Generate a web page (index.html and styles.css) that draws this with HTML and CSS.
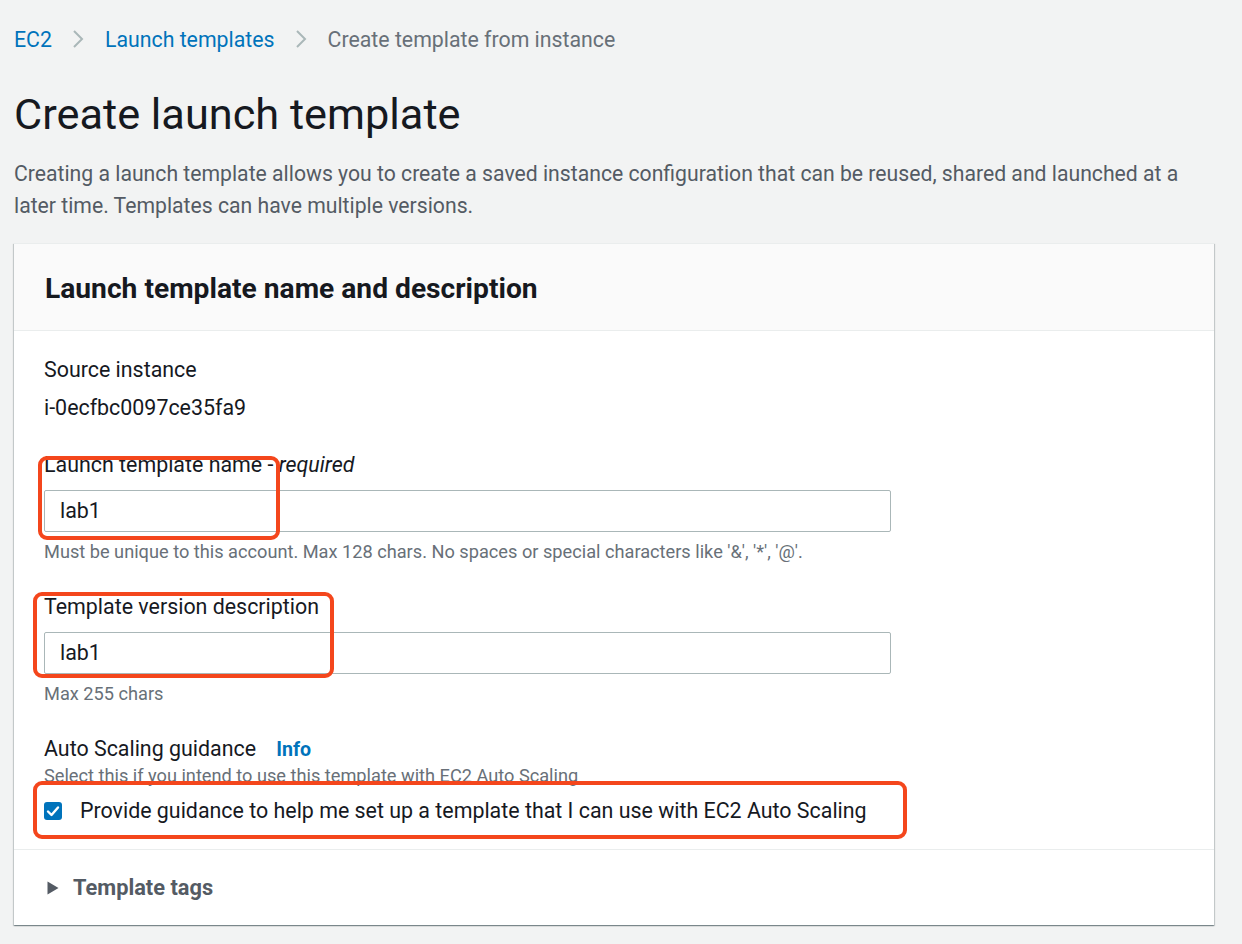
FILE: index.html
```html
<!DOCTYPE html>
<html lang="en">
<head>
<meta charset="utf-8">
<title>Create launch template</title>
<link rel="stylesheet" href="styles.css">
</head>
<body>
<div class="page">
  <nav class="breadcrumb">
    <a class="crumb-link" href="#">EC2</a>
    <svg class="chev" width="12" height="20" viewBox="0 0 12 20"><path d="M2 2 L10 10 L2 18" fill="none" stroke="#aab7b8" stroke-width="2"/></svg>
    <a class="crumb-link" href="#">Launch templates</a>
    <svg class="chev" width="12" height="20" viewBox="0 0 12 20"><path d="M2 2 L10 10 L2 18" fill="none" stroke="#aab7b8" stroke-width="2"/></svg>
    <span class="crumb-current">Create template from instance</span>
  </nav>

  <h1 class="title">Create launch template</h1>
  <p class="intro">Creating a launch template allows you to create a saved instance configuration that can be reused, shared and launched at a later time. Templates can have multiple versions.</p>

  <section class="card">
    <header class="card-header">
      <h2 class="card-title">Launch template name and description</h2>
    </header>
    <div class="card-body">
      <div class="kv">
        <div class="label">Source instance</div>
        <div class="value">i-0ecfbc0097ce35fa9</div>
      </div>

      <div class="field">
        <div class="label">Launch template name - <em>required</em></div>
        <div class="input">lab1</div>
        <div class="hint">Must be unique to this account. Max 128 chars. No spaces or special characters like '&amp;', '*', '@'.</div>
      </div>

      <div class="field">
        <div class="label">Template version description</div>
        <div class="input">lab1</div>
        <div class="hint">Max 255 chars</div>
      </div>

      <div class="field field-check">
        <div class="label">Auto Scaling guidance <a class="info" href="#">Info</a></div>
        <div class="hint">Select this if you intend to use this template with EC2 Auto Scaling</div>
        <label class="check-row">
          <span class="checkbox"><svg width="18" height="18" viewBox="0 0 18 18"><path d="M4 9.5 L7.5 13 L14 5.5" fill="none" stroke="#fff" stroke-width="2.4" stroke-linecap="round" stroke-linejoin="round"/></svg></span>
          <span class="check-label">Provide guidance to help me set up a template that I can use with EC2 Auto Scaling</span>
        </label>
      </div>
    </div>
    <div class="card-footer">
      <svg class="caret" width="12" height="14" viewBox="0 0 12 14"><path d="M0.5 0.5 L11.5 7 L0.5 13.5 Z" fill="#545b64"/></svg>
      <span class="expander">Template tags</span>
    </div>

    <div class="mark mark-name"></div>
    <div class="mark mark-desc"></div>
    <div class="mark mark-check"></div>
  </section>
</div>
</body>
</html>
```

FILE: styles.css
```css
* { box-sizing: border-box; }

html, body {
  margin: 0;
  padding: 0;
  background: #f2f3f3;
}

body {
  font-family: Roboto, "Liberation Sans", Arial, sans-serif;
  color: #16191f;
  width: 1242px;
  height: 944px;
  overflow: hidden;
}

.page {
  padding: 20px 28px 0 14px;
}

.breadcrumb {
  display: flex;
  align-items: center;
  height: 38px;
  font-size: 21.3px;
}

.crumb-link {
  color: #0073bb;
  text-decoration: none;
}

.chev {
  margin: 0 21px 0 20px;
}

.crumb-current {
  color: #687078;
}

.title {
  margin: 33px 0 0 0;
  font-size: 43.3px;
  line-height: 48px;
  font-weight: 400;
  color: #16191f;
}

.intro {
  margin: 19px 0 0 0;
  font-size: 21.2px;
  line-height: 32px;
  color: #545b64;
}

.card {
  position: relative;
  margin-top: 21px;
  background: #fff;
  border-top: 1px solid #eaeded;
  box-shadow: 0 1px 1px 0 rgba(0, 28, 36, 0.3), 1px 1px 1px 0 rgba(0, 28, 36, 0.15), -1px 1px 1px 0 rgba(0, 28, 36, 0.15);
  height: 682px;
}

.card-header {
  background: #fafafa;
  height: 87px;
  border-bottom: 1px solid #eaeded;
  display: flex;
  align-items: center;
  padding: 2px 31px 0 31px;
}

.card-title {
  margin: 0;
  font-size: 28.2px;
  font-weight: 700;
  color: #16191f;
}

.card-body {
  padding: 25px 30px 24px 30px;
  display: flex;
  flex-direction: column;
  gap: 29px;
  border-bottom: 1px solid #eaeded;
}

.kv {
  display: flex;
  flex-direction: column;
  gap: 10px;
}

.label {
  font-size: 21.4px;
  line-height: 28px;
  color: #16191f;
}

.value {
  font-size: 21.4px;
  line-height: 28px;
  color: #16191f;
}

.label em {
  font-style: italic;
}

.field {
  display: flex;
  flex-direction: column;
}

.input {
  margin-top: 11px;
  width: 847px;
  height: 42px;
  border: 1px solid #aab7b8;
  border-radius: 2px;
  padding: 0 15px;
  font-size: 21.4px;
  line-height: 40px;
  color: #16191f;
}

.hint {
  margin-top: 8px;
  font-size: 18.2px;
  line-height: 24px;
  color: #687078;
}

.field-check .hint {
  margin-top: 0;
}

.info {
  margin-left: 15px;
  font-size: 19.6px;
  font-weight: 700;
  color: #0073bb;
  text-decoration: none;
}

.check-row {
  display: flex;
  align-items: center;
  margin-top: 9px;
  height: 28px;
}

.checkbox {
  width: 18px;
  height: 18px;
  border-radius: 3px;
  background: #0073bb;
  display: inline-flex;
}

.check-label {
  margin-left: 18px;
  font-size: 21.4px;
  line-height: 28px;
  color: #16191f;
}

.card-footer {
  height: 75px;
  display: flex;
  align-items: center;
  padding-left: 33px;
}

.caret {
  margin-right: 14px;
}

.expander {
  font-size: 21.8px;
  font-weight: 700;
  color: #545b64;
}

.mark {
  position: absolute;
  border: 4px solid #f4461c;
  border-radius: 9px;
  pointer-events: none;
}

.mark-name {
  left: 24px;
  top: 212px;
  width: 242px;
  height: 84px;
}

.mark-desc {
  left: 19px;
  top: 348px;
  width: 301px;
  height: 86px;
}

.mark-check {
  left: 19px;
  top: 537px;
  width: 874px;
  height: 58px;
}
```
